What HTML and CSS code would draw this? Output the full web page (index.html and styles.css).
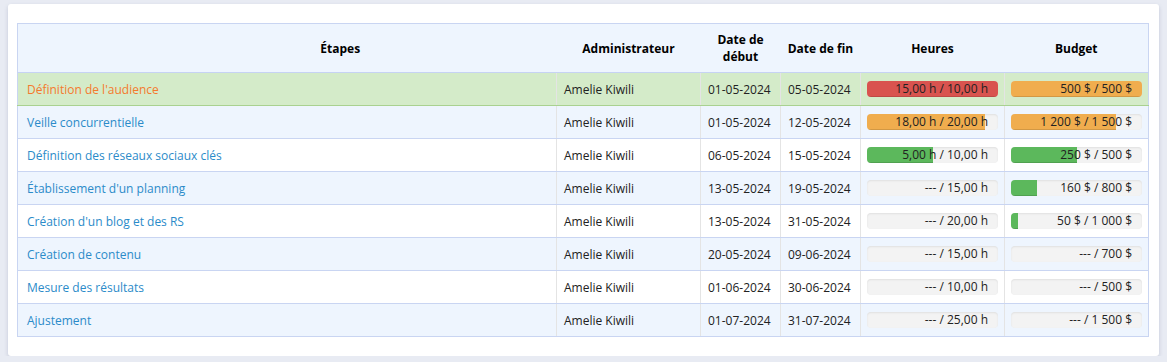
FILE: index.html
```html
<!DOCTYPE html>
<html lang="fr">
<head>
<meta charset="utf-8">
<title>Étapes</title>
<link rel="stylesheet" href="styles.css">
</head>
<body>
<div class="card">
  <table class="steps">
    <colgroup>
      <col class="c-name"><col class="c-admin"><col class="c-date"><col class="c-date"><col class="c-bar"><col class="c-bar">
    </colgroup>
    <thead>
      <tr>
        <th class="th-name">Étapes</th>
        <th>Administrateur</th>
        <th>Date de<br>début</th>
        <th>Date de fin</th>
        <th>Heures</th>
        <th>Budget</th>
      </tr>
    </thead>
    <tbody>
      <tr class="row-success">
        <td class="name"><a class="link warn" href="#">Définition de l'audience</a></td>
        <td>Amelie Kiwili</td><td>01-05-2024</td><td>05-05-2024</td>
        <td class="bar-cell"><div class="progress"><div class="fill red" style="width:100%"></div><span class="label">15,00 h / 10,00 h</span></div></td>
        <td class="bar-cell"><div class="progress"><div class="fill orange" style="width:100%"></div><span class="label">500 $ / 500 $</span></div></td>
      </tr>
      <tr class="row-alt">
        <td class="name"><a class="link" href="#">Veille concurrentielle</a></td>
        <td>Amelie Kiwili</td><td>01-05-2024</td><td>12-05-2024</td>
        <td class="bar-cell"><div class="progress"><div class="fill orange" style="width:90%"></div><span class="label">18,00 h / 20,00 h</span></div></td>
        <td class="bar-cell"><div class="progress"><div class="fill orange" style="width:80%"></div><span class="label">1 200 $ / 1 500 $</span></div></td>
      </tr>
      <tr>
        <td class="name"><a class="link" href="#">Définition des réseaux sociaux clés</a></td>
        <td>Amelie Kiwili</td><td>06-05-2024</td><td>15-05-2024</td>
        <td class="bar-cell"><div class="progress"><div class="fill green" style="width:50%"></div><span class="label">5,00 h / 10,00 h</span></div></td>
        <td class="bar-cell"><div class="progress"><div class="fill green" style="width:50%"></div><span class="label">250 $ / 500 $</span></div></td>
      </tr>
      <tr class="row-alt">
        <td class="name"><a class="link" href="#">Établissement d'un planning</a></td>
        <td>Amelie Kiwili</td><td>13-05-2024</td><td>19-05-2024</td>
        <td class="bar-cell"><div class="progress"><span class="label">--- / 15,00 h</span></div></td>
        <td class="bar-cell"><div class="progress"><div class="fill green" style="width:20%"></div><span class="label">160 $ / 800 $</span></div></td>
      </tr>
      <tr>
        <td class="name"><a class="link" href="#">Création d'un blog et des RS</a></td>
        <td>Amelie Kiwili</td><td>13-05-2024</td><td>31-05-2024</td>
        <td class="bar-cell"><div class="progress"><span class="label">--- / 20,00 h</span></div></td>
        <td class="bar-cell"><div class="progress"><div class="fill green" style="width:5%"></div><span class="label">50 $ / 1 000 $</span></div></td>
      </tr>
      <tr class="row-alt">
        <td class="name"><a class="link" href="#">Création de contenu</a></td>
        <td>Amelie Kiwili</td><td>20-05-2024</td><td>09-06-2024</td>
        <td class="bar-cell"><div class="progress"><span class="label">--- / 15,00 h</span></div></td>
        <td class="bar-cell"><div class="progress"><span class="label">--- / 700 $</span></div></td>
      </tr>
      <tr>
        <td class="name"><a class="link" href="#">Mesure des résultats</a></td>
        <td>Amelie Kiwili</td><td>01-06-2024</td><td>30-06-2024</td>
        <td class="bar-cell"><div class="progress"><span class="label">--- / 10,00 h</span></div></td>
        <td class="bar-cell"><div class="progress"><span class="label">--- / 500 $</span></div></td>
      </tr>
      <tr class="row-alt">
        <td class="name"><a class="link" href="#">Ajustement</a></td>
        <td>Amelie Kiwili</td><td>01-07-2024</td><td>31-07-2024</td>
        <td class="bar-cell"><div class="progress"><span class="label">--- / 25,00 h</span></div></td>
        <td class="bar-cell"><div class="progress"><span class="label">--- / 1 500 $</span></div></td>
      </tr>
    </tbody>
  </table>
</div>
</body>
</html>
```

FILE: styles.css
```css
html, body {
  margin: 0;
  padding: 0;
}
body {
  background: #e8ebf3;
  padding: 4px 8px 0 8px;
  font-family: "Open Sans", "Noto Sans", sans-serif;
  font-size: 12px;
  color: #222;
}
.card {
  width: 1151px;
  box-sizing: border-box;
  background: #fff;
  border-radius: 3px;
  box-shadow: 0 2px 4px rgba(60, 70, 110, 0.2);
  padding: 19px 10px 19px 9px;
}
.steps {
  width: 1132px;
  border-collapse: collapse;
  table-layout: fixed;
  border: 1px solid #c9d5f2;
}
.c-name { width: 539px; }
.c-admin { width: 144px; }
.c-date { width: 80px; }
.c-bar { width: 144px; }

.steps thead th {
  background: #eef5fe;
  font-weight: 700;
  color: #000;
  height: 48px;
  padding: 0 4px;
  text-align: center;
  line-height: 17px;
  border-bottom: 1px solid #c6d3f3;
}
.steps thead th.th-name {
  padding-left: 110px;
}
.steps tbody td {
  height: 32px;
  padding: 0 7px;
  border-bottom: 1px solid #c9d5f2;
  border-left: 1px solid #e4e4e4;
  white-space: nowrap;
  vertical-align: middle;
}
.steps tbody td.name {
  padding-left: 9px;
  border-left: none;
}
.steps tbody tr.row-alt td {
  background: #eef5fe;
}
.steps tbody tr.row-success td {
  background: #d4ebc9;
  border-bottom-color: #a9d190;
}
.link {
  color: #2b8bc9;
  text-decoration: none;
}
.link.warn {
  color: #f47a2e;
}
.steps tbody td.bar-cell {
  padding: 0 6px 0 6px;
}
.progress {
  display: grid;
  height: 16px;
  border-radius: 4px;
  background: #f3f3f3;
  box-shadow: inset 0 1px 2px rgba(0, 0, 0, 0.08);
  overflow: hidden;
}
.progress > .fill,
.progress > .label {
  grid-area: 1 / 1;
}
.fill {
  height: 16px;
  box-shadow: inset 0 -1px 0 rgba(0, 0, 0, 0.12);
}
.fill.red { background: #d9534f; }
.fill.orange { background: #f0ad4e; }
.fill.green { background: #5cb85c; }
.label {
  justify-self: end;
  align-self: center;
  padding-right: 10px;
  line-height: 16px;
  color: #222;
}
```
